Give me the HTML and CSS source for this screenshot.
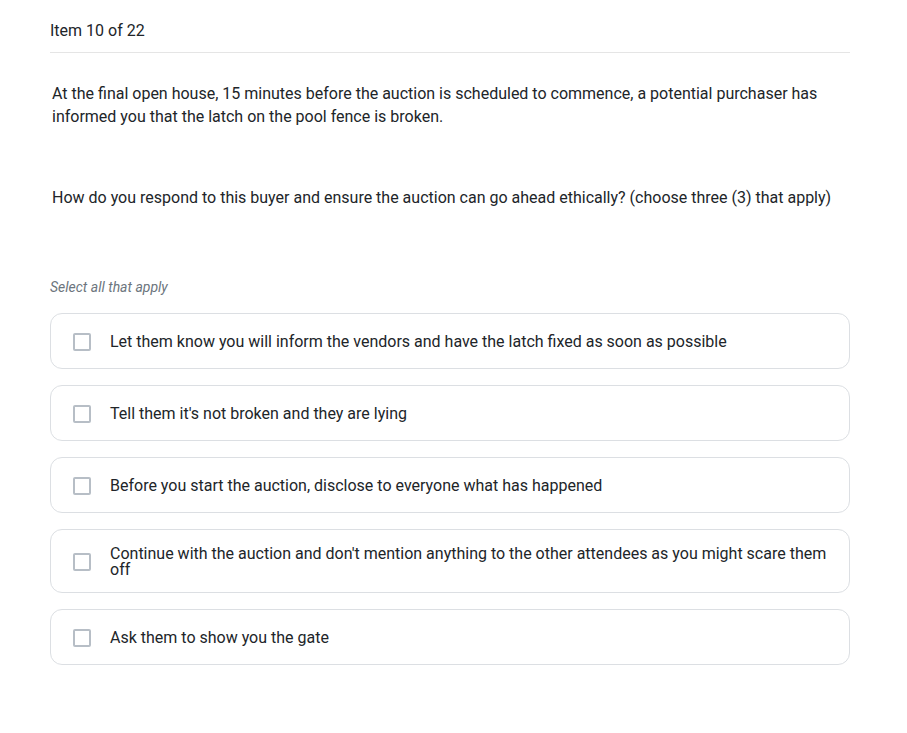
FILE: index.html
```html
<!DOCTYPE html>
<html>
<head>
<meta charset="utf-8">
<link rel="stylesheet" href="styles.css">
</head>
<body>
<div class="wrap">
  <div class="header">Item 10 of 22</div>
  <div class="question">
    <p class="q1">At the final open house, 15 minutes before the auction is scheduled to commence, a potential purchaser has informed you that the latch on the pool fence is broken.</p>
    <p class="q2">How do you respond to this buyer and ensure the auction can go ahead ethically? (choose three (3) that apply)</p>
  </div>
  <div class="hint">Select all that apply</div>
  <div class="options">
    <label class="option"><span class="box"></span><span class="text">Let them know you will inform the vendors and have the latch fixed as soon as possible</span></label>
    <label class="option"><span class="box"></span><span class="text">Tell them it's not broken and they are lying</span></label>
    <label class="option"><span class="box"></span><span class="text">Before you start the auction, disclose to everyone what has happened</span></label>
    <label class="option"><span class="box"></span><span class="text">Continue with the auction and don't mention anything to the other attendees as you might scare them off</span></label>
    <label class="option"><span class="box"></span><span class="text">Ask them to show you the gate</span></label>
  </div>
</div>
</body>
</html>
```

FILE: styles.css
```css
html, body {
  margin: 0;
  padding: 0;
  background: #ffffff;
}
body {
  font-family: Roboto, "Liberation Sans", Arial, sans-serif;
  color: #212529;
}
.wrap {
  width: 800px;
  margin: 0 0 0 50px;
  padding-top: 19px;
}
.header {
  font-size: 16px;
  line-height: 24px;
  padding-bottom: 9px;
  border-bottom: 1px solid #e5e5e5;
}
.question {
  padding: 0 2px;
  margin-top: 29px;
  font-size: 16px;
  line-height: 23px;
}
.question p {
  margin: 0;
}
.q2 {
  margin-top: 58px !important;
}
.hint {
  margin-top: 68px;
  font-size: 14px;
  line-height: 20px;
  font-style: italic;
  color: #6c757d;
}
.options {
  margin-top: 16px;
  display: flex;
  flex-direction: column;
  gap: 16px;
}
.option {
  display: flex;
  align-items: center;
  min-height: 56px;
  box-sizing: border-box;
  padding: 16px 22px 14px;
  border: 1px solid #dcdfe3;
  border-radius: 12px;
  font-size: 16px;
  line-height: 16px;
}
.box {
  flex: none;
  width: 14px;
  height: 14px;
  border: 2px solid #b7bec6;
  border-radius: 2px;
  margin-right: 19px;
}
.text {
  flex: 1;
}
```
